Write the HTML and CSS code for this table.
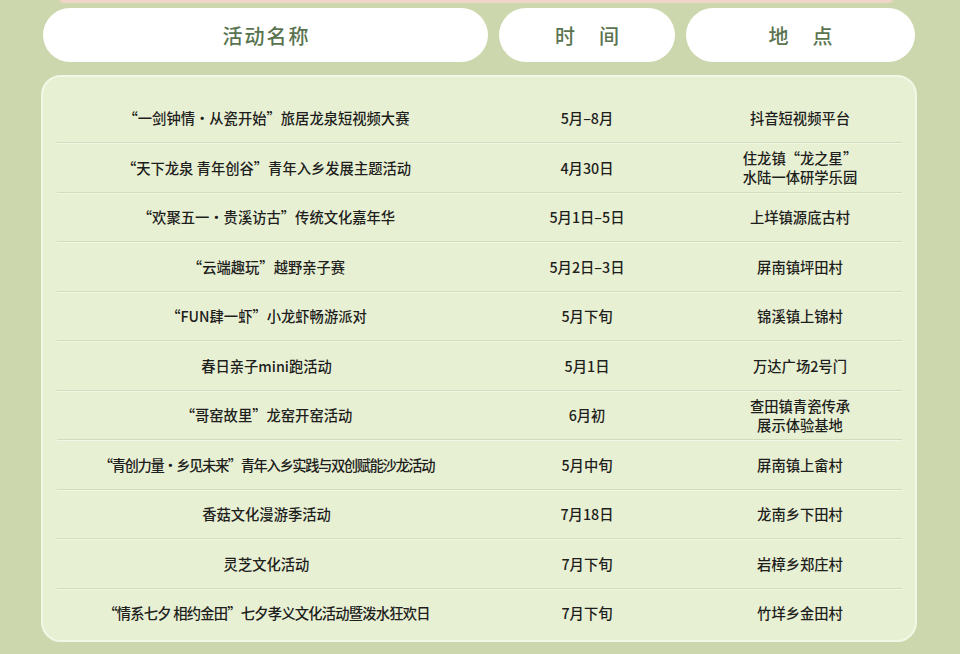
FILE: index.html
```html
<!DOCTYPE html>
<html lang="zh-CN">
<head>
<meta charset="utf-8">
<title>活动列表</title>
<link rel="stylesheet" href="styles.css">
</head>
<body>
<div class="page">
  <div class="top-strip"></div>
  <div class="heads">
    <div class="pill pill-name">活动名称</div>
    <div class="pill pill-time">时　间</div>
    <div class="pill pill-place">地　点</div>
  </div>
  <div class="card">
    <div class="row"><div class="c">“一剑钟情·从瓷开始”旅居龙泉短视频大赛</div><div class="c">5月–8月</div><div class="c">抖音短视频平台</div></div>
    <div class="row"><div class="c">“天下龙泉 青年创谷”青年入乡发展主题活动</div><div class="c">4月30日</div><div class="c">住龙镇“龙之星”<br>水陆一体研学乐园</div></div>
    <div class="row"><div class="c">“欢聚五一·贵溪访古”传统文化嘉年华</div><div class="c">5月1日–5日</div><div class="c">上垟镇源底古村</div></div>
    <div class="row"><div class="c">“云端趣玩”越野亲子赛</div><div class="c">5月2日–3日</div><div class="c">屏南镇坪田村</div></div>
    <div class="row"><div class="c">“FUN肆一虾”小龙虾畅游派对</div><div class="c">5月下旬</div><div class="c">锦溪镇上锦村</div></div>
    <div class="row"><div class="c">春日亲子mini跑活动</div><div class="c">5月1日</div><div class="c">万达广场2号门</div></div>
    <div class="row"><div class="c">“哥窑故里”龙窑开窑活动</div><div class="c">6月初</div><div class="c">查田镇青瓷传承<br>展示体验基地</div></div>
    <div class="row"><div class="c c-tight">“青创力量·乡见未来”青年入乡实践与双创赋能沙龙活动</div><div class="c">5月中旬</div><div class="c">屏南镇上畲村</div></div>
    <div class="row"><div class="c">香菇文化漫游季活动</div><div class="c">7月18日</div><div class="c">龙南乡下田村</div></div>
    <div class="row"><div class="c">灵芝文化活动</div><div class="c">7月下旬</div><div class="c">岩樟乡郑庄村</div></div>
    <div class="row"><div class="c c-snug">“情系七夕 相约金田”七夕孝义文化活动暨泼水狂欢日</div><div class="c">7月下旬</div><div class="c">竹垟乡金田村</div></div>
  </div>
</div>
</body>
</html>
```

FILE: styles.css
```css
* { box-sizing: border-box; }
html, body { margin: 0; padding: 0; }
body {
  background: #cdd7ad;
  font-family: "Noto Sans CJK SC", "Noto Sans", sans-serif;
  width: 960px;
  height: 654px;
  overflow: hidden;
}
.page {
  padding: 0 45px 0 43px;
}
.top-strip {
  height: 3px;
  margin: 0 22px 0 17px;
  background: #efd5c5;
  border-radius: 0 0 3px 3px;
}
.heads {
  display: flex;
  gap: 11px;
  margin-top: 5px;
  height: 54px;
}
.pill {
  background: #ffffff;
  border-radius: 27px;
  display: flex;
  align-items: center;
  justify-content: center;
  color: #5a744f;
  font-size: 20px;
  font-weight: 500;
  letter-spacing: 2px;
  padding-left: 2px;
}
.pill-name { width: 445px; }
.pill-time { width: 176px; }
.pill-place { width: 229px; }
.card {
  margin: 13px -2px 0 -2px;
  background: #e8f0d4;
  border: 2px solid #f3f7e6;
  border-radius: 20px;
  padding: 15.5px 13px 3px 14px;
  height: 567px;
}
.row {
  display: grid;
  grid-template-columns: 419px 222px 204px;
  height: 49.5px;
  align-items: center;
  border-top: 1px solid #d3dcba;
  box-shadow: inset 0 1px 0 #f2f6e4;
}
.row:first-child {
  border-top: 1px solid transparent;
  box-shadow: none;
}
.c {
  text-align: center;
  font-size: 14.3px;
  font-weight: 500;
  color: #1e1e1c;
  line-height: 19px;
}
.c-tight { letter-spacing: -1.4px; }
.c-snug { letter-spacing: -0.8px; }
```
